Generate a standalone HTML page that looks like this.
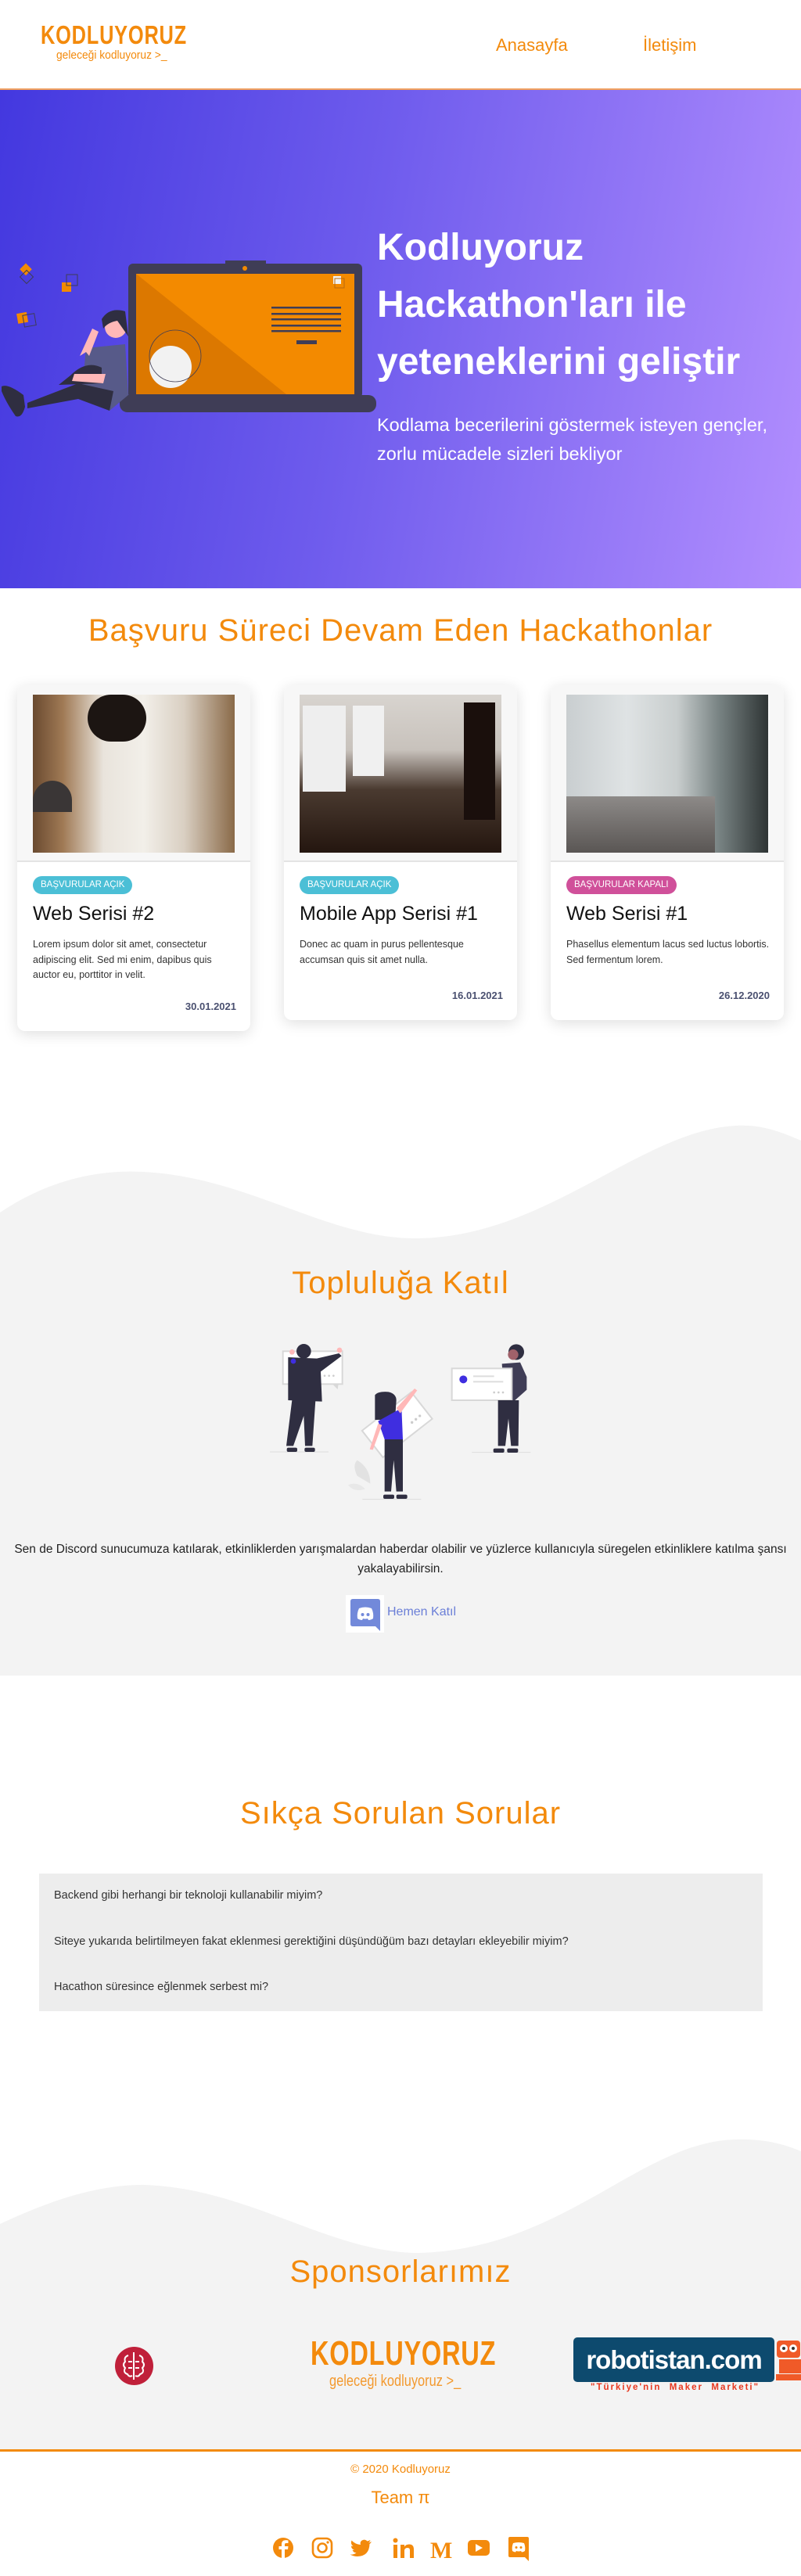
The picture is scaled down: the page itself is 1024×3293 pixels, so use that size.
<!DOCTYPE html>
<html><head><meta charset="utf-8">
<style>
*{margin:0;padding:0;box-sizing:border-box}
body{width:1024px;height:3293px;position:relative;background:#fff;font-family:"Liberation Sans",sans-serif;overflow:hidden}
.a{position:absolute}
.or{color:#f38a0c}
.h2{position:absolute;left:0;width:1024px;text-align:center;color:#f38a0c;font-size:40px;letter-spacing:1px}
.card{position:absolute;background:#fff;border-radius:10px;box-shadow:0 4px 18px rgba(0,0,0,.13);overflow:hidden;width:298px}
.card .im{position:absolute;left:0;top:0;width:298px;height:226px;background:#f7f7f7;border-bottom:2px solid #e4e4e4}
.card .ph{position:absolute;left:20px;top:12px;width:258px;height:202px}
.badge{position:absolute;left:20px;top:244px;height:23px;border-radius:12px;color:#fff;font-size:11.5px;line-height:23px;padding:0 10px}
.ct{position:absolute;left:20px;top:278px;font-size:25px;color:#111}
.cd{position:absolute;left:20px;top:322px;width:262px;font-size:12.5px;line-height:19.5px;color:#333}
.dt{position:absolute;right:18px;font-size:13px;font-weight:bold;color:#4a5070}
.q{position:absolute;left:69px;font-size:14.5px;color:#333}
</style></head><body>

<!-- header -->
<div class="a or" style="left:52px;top:26px;font-size:33px;font-weight:bold;letter-spacing:1px;transform:scaleX(.77);transform-origin:left;white-space:nowrap">KODLUYORUZ</div>
<div class="a or" style="left:72px;top:62px;font-size:15px;transform:scaleX(.92);transform-origin:left;white-space:nowrap">geleceği kodluyoruz &gt;_</div>
<div class="a or" style="left:634px;top:45px;font-size:22px">Anasayfa</div>
<div class="a or" style="left:822px;top:45px;font-size:22px">İletişim</div>
<div class="a" style="left:0;top:113px;width:1024px;height:2px;background:#f0a060"></div>

<!-- hero -->
<div class="a" style="left:0;top:115px;width:1024px;height:637px;background:linear-gradient(100deg,#4338df 0%,#6f5ced 45%,#b28efe 100%)"></div>
<svg class="a" style="left:0;top:0" width="500" height="560" viewBox="0 0 500 560">
 <g>
  <rect x="27" y="339" width="11" height="11" fill="#f38a00" transform="rotate(45 33 345)"/>
  <rect x="28" y="348" width="12" height="12" fill="none" stroke="#3f3d56" transform="rotate(45 34 354)"/>
  <rect x="79" y="361" width="12" height="12" fill="#f38a00"/>
  <rect x="85" y="351" width="14" height="14" fill="none" stroke="#3f3d56"/>
  <rect x="22" y="400" width="13" height="13" fill="#f38a00" transform="rotate(-10 28 406)"/>
  <rect x="30" y="402" width="15" height="15" fill="none" stroke="#3f3d56" transform="rotate(-10 37 409)"/>
 </g>
 <rect x="288" y="333" width="52" height="6" fill="#3f3d56"/>
 <rect x="164" y="337" width="299" height="172" rx="6" fill="#3f3d56"/>
 <rect x="174" y="350" width="279" height="154" fill="#f38a00"/>
 <polygon points="174,350 366,504 174,504" fill="#dc7800"/>
 <circle cx="313" cy="343" r="3" fill="#f38a00"/>
 <rect x="426" y="353" width="10" height="10" fill="#f2f2f2"/>
 <rect x="428" y="356" width="12" height="12" fill="none" stroke="#b86a10"/>
 <g fill="#3f3d56"><rect x="347" y="392" width="89" height="2.5"/><rect x="347" y="400" width="89" height="2.5"/><rect x="347" y="407" width="89" height="2.5"/><rect x="347" y="415" width="89" height="2.5"/><rect x="347" y="422" width="89" height="2.5"/><rect x="379" y="435" width="26" height="5"/></g>
 <circle cx="218" cy="469" r="27" fill="#f2f2f2"/>
 <circle cx="224" cy="455" r="33" fill="none" stroke="#3f3d56" stroke-width="0.8"/>
 <rect x="153" y="505" width="328" height="22" rx="10" fill="#3f3d56"/>
 <path d="M110 445 L160 440 L164 505 L140 525 L105 500 Z" fill="#575a89"/>
 <circle cx="148" cy="418" r="14" fill="#ffb8b8"/>
 <path d="M130 408 Q140 392 160 398 L164 430 L150 410 Q138 412 132 420 Z" fill="#2f2e41"/>
 <path d="M110 450 L102 455 L118 420 L126 424 L114 455 Z" fill="#ffb8b8"/>
 <path d="M90 480 Q110 460 130 470 L130 490 L75 492 Z" fill="#2f2e41"/>
 <path d="M35 515 L100 490 L145 500 L140 525 L100 510 L35 522 Z" fill="#2f2e41"/>
 <path d="M95 478 L135 478 L132 490 L92 487 Z" fill="#ffb8b8"/>
 <path d="M2 494 Q10 490 30 505 L32 520 Q28 535 20 532 Q8 515 2 500 Z" fill="#2f2e41"/>
</svg>
<div class="a" style="left:482px;top:280px;color:#fff;font-size:48px;font-weight:bold;line-height:73px;white-space:nowrap">Kodluyoruz<br>Hackathon'ları ile<br>yeteneklerini geliştir</div>
<div class="a" style="left:482px;top:525px;color:#fff;font-size:23.5px;line-height:37px;white-space:nowrap">Kodlama becerilerini göstermek isteyen gençler,<br>zorlu mücadele sizleri bekliyor</div>

<!-- hackathons -->
<div class="h2" style="top:784px">Başvuru Süreci Devam Eden Hackathonlar</div>

<div class="card" style="left:22px;top:876px;height:442px">
 <div class="im"><div class="ph" style="background:linear-gradient(90deg,#6a4a30 0%,#a07a55 15%,#e9e4dc 35%,#f2efe9 55%,#d9cfc2 75%,#8a6a48 100%)"><div style="position:absolute;left:70px;top:0;width:75px;height:60px;border-radius:40px;background:#1c1512"></div><div style="position:absolute;left:0;top:110px;width:50px;height:40px;border-radius:25px 25px 0 0;background:#3a3636"></div></div></div>
 <div class="badge" style="background:#4bbfd6">BAŞVURULAR AÇIK</div>
 <div class="ct">Web Serisi #2</div>
 <div class="cd">Lorem ipsum dolor sit amet, consectetur adipiscing elit. Sed mi enim, dapibus quis auctor eu, porttitor in velit.</div>
 <div class="dt" style="top:403px">30.01.2021</div>
</div>
<div class="card" style="left:363px;top:876px;height:428px">
 <div class="im"><div class="ph" style="background:linear-gradient(180deg,#d8d4cf 0%,#c8c2bc 35%,#4a3a30 60%,#24160f 100%)"><div style="position:absolute;left:4px;top:14px;width:55px;height:110px;background:#eeeeee"></div><div style="position:absolute;left:68px;top:14px;width:40px;height:90px;background:#f0f0f0"></div><div style="position:absolute;left:210px;top:10px;width:40px;height:150px;background:#1a0f0c"></div></div></div>
 <div class="badge" style="background:#4bbfd6">BAŞVURULAR AÇIK</div>
 <div class="ct">Mobile App Serisi #1</div>
 <div class="cd">Donec ac quam in purus pellentesque accumsan quis sit amet nulla.</div>
 <div class="dt" style="top:389px">16.01.2021</div>
</div>
<div class="card" style="left:704px;top:876px;height:428px">
 <div class="im"><div class="ph" style="background:linear-gradient(90deg,#c9ced0 0%,#dfe3e4 30%,#c8cdcd 55%,#7a8585 75%,#2e3434 100%)"><div style="position:absolute;left:0;top:130px;width:190px;height:72px;background:linear-gradient(180deg,#8d8a88,#5a5654)"></div></div></div>
 <div class="badge" style="background:#d0509a">BAŞVURULAR KAPALI</div>
 <div class="ct">Web Serisi #1</div>
 <div class="cd">Phasellus elementum lacus sed luctus lobortis. Sed fermentum lorem.</div>
 <div class="dt" style="top:389px">26.12.2020</div>
</div>

<!-- community wave -->
<svg class="a" style="left:0;top:1430px" width="1024" height="712" viewBox="0 0 1024 712">
 <path d="M0 120 C60 80 120 65 183 68 C320 75 420 155 536 153 C700 150 820 15 941 9 C975 7 1000 18 1024 28 L1024 712 L0 712 Z" fill="#f3f3f3"/>
</svg>
<div class="h2" style="top:1618px">Topluluğa Katıl</div>
<svg class="a" style="left:340px;top:1700px" width="350" height="230" viewBox="0 0 1050 690">
 <line x1="15" y1="468" x2="240" y2="468" stroke="#ddd" stroke-width="3"/>
 <line x1="790" y1="470" x2="1015" y2="470" stroke="#ddd" stroke-width="3"/>
 <line x1="370" y1="650" x2="595" y2="650" stroke="#ddd" stroke-width="3"/>
 <rect x="65" y="82" width="228" height="126" fill="#fff" stroke="#d8d8d8" stroke-width="6"/>
 <polygon points="255,208 278,208 275,228" fill="#d8d8d8"/>
 <circle cx="225" cy="176" r="4" fill="#ccc"/><circle cx="242" cy="176" r="4" fill="#ccc"/><circle cx="259" cy="176" r="4" fill="#ccc"/>
 <rect x="180" y="110" width="50" height="6" fill="#ddd"/>
 <path d="M85 105 L195 110 L280 90 L290 100 L210 160 L215 275 L85 270 Z" fill="#2f2e41"/>
 <circle cx="105" cy="120" r="10" fill="#3f2ee0"/>
 <circle cx="145" cy="82" r="28" fill="#2f2e41"/>
 <circle cx="100" cy="85" r="10" fill="#ffb8b8"/><circle cx="282" cy="78" r="10" fill="#ffb8b8"/>
 <path d="M100 270 L190 270 L178 445 L150 445 L145 330 L105 445 L78 445 Z" fill="#2f2e41"/>
 <rect x="80" y="452" width="40" height="16" rx="6" fill="#2f2e41"/><rect x="148" y="452" width="40" height="16" rx="6" fill="#2f2e41"/>
 <g transform="rotate(-38 500 360)"><rect x="380" y="300" width="240" height="130" fill="#fff" stroke="#d8d8d8" stroke-width="6"/></g>
 <circle cx="560" cy="355" r="5" fill="#ccc"/><circle cx="575" cy="343" r="5" fill="#ccc"/><circle cx="590" cy="330" r="5" fill="#ccc"/>
 <path d="M350 560 Q330 520 350 500 Q400 530 400 590 Z" fill="#e2e2e2"/>
 <path d="M315 595 Q350 580 380 610 Q340 625 315 595 Z" fill="#e8e8e8"/>
 <path d="M418 250 Q430 235 470 238 Q500 245 500 270 L495 345 L418 345 Z" fill="#2f2e41"/>
 <path d="M430 350 L520 300 L525 420 L455 420 Z" fill="#3f2ee0"/>
 <path d="M500 300 L570 225 L580 232 L515 320 Z" fill="#ffb8b8"/>
 <path d="M430 360 L445 365 L410 460 L398 458 Z" fill="#ffb8b8"/>
 <path d="M455 420 L525 420 L525 620 L500 620 L490 500 L480 620 L455 620 Z" fill="#2f2e41"/>
 <rect x="450" y="632" width="42" height="16" rx="6" fill="#2f2e41"/><rect x="500" y="632" width="42" height="16" rx="6" fill="#2f2e41"/>
 <path d="M905 130 L975 125 L1000 180 L1000 230 L955 270 L915 270 Z" fill="#3f3d56"/>
 <circle cx="960" cy="85" r="30" fill="#2f2e41"/><circle cx="948" cy="95" r="20" fill="#a0616a"/>
 <rect x="713" y="148" width="230" height="122" fill="#fff" stroke="#d8d8d8" stroke-width="6"/>
 <polygon points="905,270 930,270 925,290" fill="#d8d8d8"/>
 <circle cx="757" cy="190" r="15" fill="#3f2ee0"/>
 <rect x="795" y="175" width="80" height="6" fill="#ddd"/><rect x="795" y="196" width="115" height="6" fill="#ddd"/>
 <circle cx="875" cy="240" r="4" fill="#ccc"/><circle cx="892" cy="240" r="4" fill="#ccc"/><circle cx="909" cy="240" r="4" fill="#ccc"/>
 <path d="M890 270 L970 270 L968 445 L940 445 L930 340 L918 445 L890 445 Z" fill="#2f2e41"/>
 <rect x="872" y="455" width="42" height="16" rx="6" fill="#2f2e41"/><rect x="925" y="455" width="42" height="16" rx="6" fill="#2f2e41"/>
</svg>
<div class="a" style="left:8px;top:1968px;width:1008px;text-align:center;font-size:15.5px;line-height:25px;color:#222">Sen de Discord sunucumuza katılarak, etkinliklerden yarışmalardan haberdar olabilir ve yüzlerce kullanıcıyla süregelen etkinliklere katılma şansı yakalayabilirsin.</div>
<div class="a" style="left:442px;top:2039px;width:49px;height:48px;background:#fff"></div>
<svg class="a" style="left:446px;top:2042px" width="42" height="44" viewBox="0 0 42 44"><path d="M5 2 H37 Q40 2 40 5 V43 L34 37 H5 Q2 37 2 34 V5 Q2 2 5 2 Z" fill="#7289da"/><path d="M13 14 Q21 11 29 14 Q32 20 31 27 Q28 29 25 29 L24 27 Q21 28 18 27 L17 29 Q14 29 11 27 Q10 20 13 14 Z" fill="#fff"/><circle cx="17.5" cy="22" r="2" fill="#7289da"/><circle cx="24.5" cy="22" r="2" fill="#7289da"/></svg>
<div class="a" style="left:495px;top:2052px;font-size:16px;color:#6b7fd7">Hemen Katıl</div>

<!-- FAQ -->
<div class="h2" style="top:2296px">Sıkça Sorulan Sorular</div>
<div class="a" style="left:50px;top:2395px;width:925px;height:176px;background:#ededed"></div>
<div class="q" style="top:2415px">Backend gibi herhangi bir teknoloji kullanabilir miyim?</div>
<div class="q" style="top:2474px">Siteye yukarıda belirtilmeyen fakat eklenmesi gerektiğini düşündüğüm bazı detayları ekleyebilir miyim?</div>
<div class="q" style="top:2532px">Hacathon süresince eğlenmek serbest mi?</div>

<!-- sponsors -->
<svg class="a" style="left:0;top:2725px" width="1024" height="408" viewBox="0 0 1024 408">
 <path d="M0 118 C60 90 120 68 183 68 C320 72 420 155 536 155 C720 150 820 12 941 10 C975 9 1000 15 1024 25 L1024 408 L0 408 Z" fill="#f3f3f3"/>
</svg>
<div class="h2" style="top:2882px">Sponsorlarımız</div>
<svg class="a" style="left:146px;top:2999px" width="51" height="51" viewBox="0 0 51 51"><ellipse cx="25.5" cy="25.5" rx="24.5" ry="24.5" fill="#c0203a"/><g stroke="#fff" stroke-width="2" fill="none"><path d="M25 8 V43"/><path d="M18 12 Q12 14 14 20 Q10 24 14 28 Q11 34 17 36 Q19 40 23 38"/><path d="M32 12 Q38 14 36 20 Q40 24 36 28 Q39 34 33 36 Q31 40 27 38"/><path d="M18 20 H23 M18 28 H23 M27 20 H32 M27 28 H32"/></g></svg>
<div class="a or" style="left:397px;top:2984px;font-size:44px;font-weight:bold;letter-spacing:1px;transform:scaleX(.74);transform-origin:left;white-space:nowrap">KODLUYORUZ</div>
<div class="a or" style="left:421px;top:3033px;font-size:20px;transform:scaleX(.82);transform-origin:left;white-space:nowrap;opacity:.85">geleceği kodluyoruz &gt;_</div>
<div class="a" style="left:733px;top:2988px;width:257px;height:57px;background:#0d4a6e;border-radius:5px;color:#fff;font-size:33px;font-weight:bold;text-align:center;line-height:57px;letter-spacing:-1px;overflow:hidden">robotistan.com</div>
<svg class="a" style="left:990px;top:2990px" width="34" height="54" viewBox="0 0 34 54"><rect x="3" y="2" width="30" height="22" rx="4" fill="#f05a28"/><circle cx="12" cy="12" r="5" fill="#fff"/><circle cx="24" cy="12" r="5" fill="#fff"/><circle cx="12" cy="12" r="2" fill="#333"/><circle cx="24" cy="12" r="2" fill="#333"/><rect x="6" y="26" width="28" height="18" fill="#f05a28"/><rect x="2" y="45" width="32" height="8" fill="#f05a28"/></svg>
<div class="a" style="left:755px;top:3046px;font-size:11.5px;font-weight:bold;color:#e8371e;letter-spacing:2px;white-space:nowrap">"Türkiye'nin&nbsp; Maker&nbsp; Marketi"</div>

<!-- footer -->
<div class="a" style="left:0;top:3131px;width:1024px;height:3px;background:#f38a0c"></div>
<div class="a or" style="left:0;width:1024px;top:3148px;text-align:center;font-size:15px">© 2020 Kodluyoruz</div>
<div class="a or" style="left:0;width:1024px;top:3180px;text-align:center;font-size:22px">Team π</div>
<svg class="a" style="left:340px;top:3240px" width="340" height="36" viewBox="0 0 340 36" fill="#f38a0c">
 <circle cx="22" cy="17" r="13"/><path d="M24 30 V19 H28 L28.5 15 H24 V12.5 Q24 11 26 11 H28.5 V7.5 Q26 7 24.5 7.2 Q20 7.5 20 12 V15 H16.5 V19 H20 V30 Z" fill="#fff"/>
 <rect x="60" y="5" width="24" height="24" rx="7" fill="none" stroke="#f38a0c" stroke-width="2.6"/><circle cx="72" cy="17" r="5.5" fill="none" stroke="#f38a0c" stroke-width="2.6"/><circle cx="79" cy="10" r="1.6"/>
 <path d="M135 9 Q133 10 131 10.5 Q133 9 133.5 7 Q131.5 8 129.5 8.5 Q126 5 122 8 Q120 10 121 13 Q114 12.5 109.5 7.5 Q107.5 12 111.5 15 Q110 15 109 14.5 Q109 18.5 113 19.5 Q111.5 20 110.5 19.8 Q111.5 23 115.5 23.5 Q112 26 107.5 25.5 Q112 28 117 28 Q132 27.5 132.5 12 Q134 11 135 9 Z"/>
 <rect x="163" y="13" width="5" height="17"/><circle cx="165.5" cy="7.5" r="3"/><path d="M172 13 H177 V15.5 Q179 12.5 183 12.5 Q189 12.5 189 19 V30 H184 V20 Q184 17 181 17 Q177 17 177 21 V30 H172 Z"/>
 <text x="210" y="30" font-family="Liberation Serif,serif" font-weight="bold" font-size="30">M</text>
 <rect x="258" y="7" width="28" height="20" rx="5"/><path d="M268 12 L277 17 L268 22 Z" fill="#fff"/>
 <path d="M312 3 H334 Q336 3 336 5 V34 L331 29 H312 Q310 29 310 27 V5 Q310 3 312 3 Z"/><path d="M316 11 Q323 9 330 11 Q332 16 331 21 Q329 22.5 327 22.5 L326 21 Q323 22 320 21 L319 22.5 Q317 22.5 315 21 Q314 16 316 11 Z" fill="#fff"/><circle cx="320" cy="16.5" r="1.5"/><circle cx="326" cy="16.5" r="1.5"/>
</svg>
</body></html>
